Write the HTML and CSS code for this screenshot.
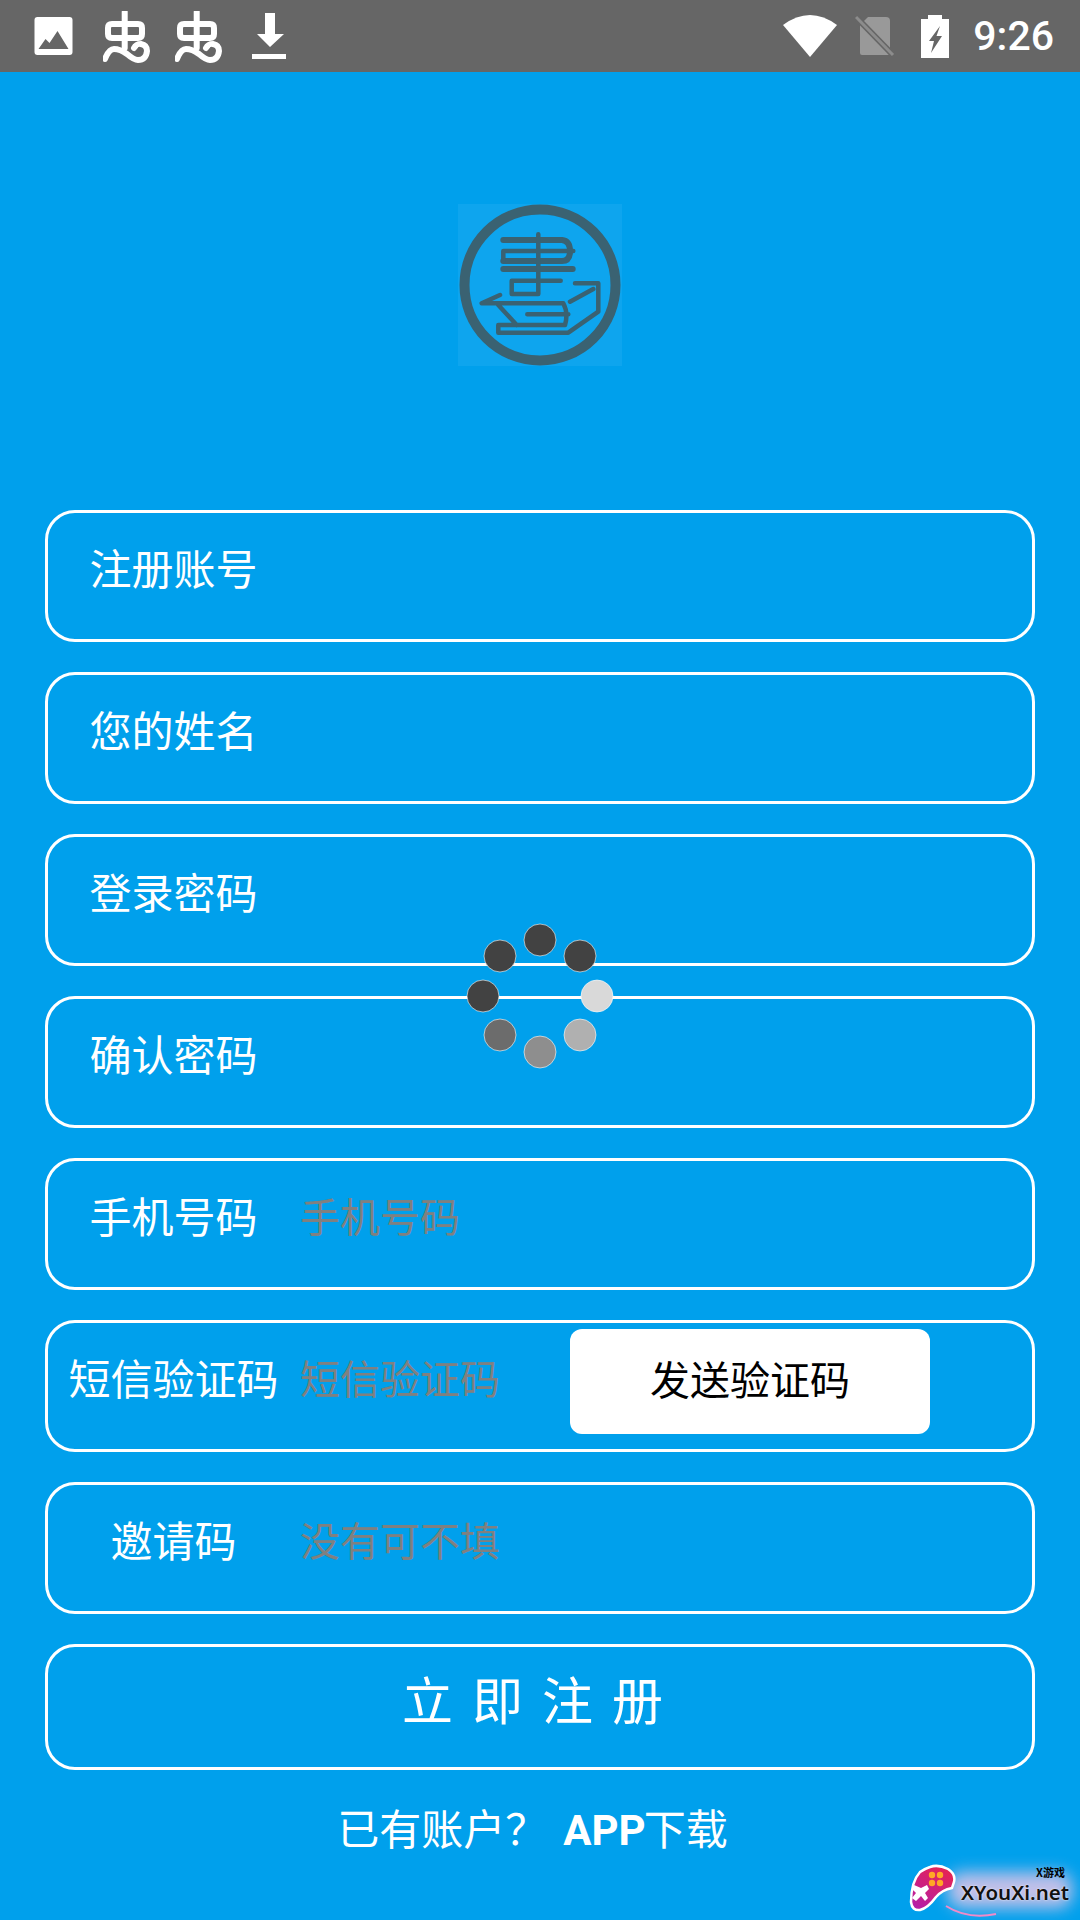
FILE: index.html
```html
<!DOCTYPE html>
<html lang="zh-CN">
<head>
<meta charset="utf-8">
<title>注册账号</title>
<link rel="stylesheet" href="styles.css">
</head>
<body>
<div class="page">
  <header class="status">
    <div class="status-left">
      <svg class="ic-image" viewBox="0 0 38 38"><rect width="38" height="38" rx="3" fill="#fff"/><path d="M4 32 L11 22 L15 26 L23 14 L34 32 Z" fill="#666"/></svg>
      <svg class="ic-worm" viewBox="0 0 50 52"><g fill="none" stroke="#fff" stroke-width="6" stroke-linecap="round" stroke-linejoin="round"><path d="M21.700 1 V37"/><path d="M9 13 H35 Q39 13 39 17 V23 Q39 27 35 27 H9 Q5 27 5 23 V17 Q5 13 9 13 Z"/><path d="M2 48 Q6 38 11 38 Q17 38 24 43 Q31 49 35 49 Q43 49 44 40 Q44 34 38 33 Q33 33 31 37"/></g><circle cx="36.500" cy="37.500" r="1.700" fill="#666"/></svg>
      <svg class="ic-worm" viewBox="0 0 50 52"><g fill="none" stroke="#fff" stroke-width="6" stroke-linecap="round" stroke-linejoin="round"><path d="M21.700 1 V37"/><path d="M9 13 H35 Q39 13 39 17 V23 Q39 27 35 27 H9 Q5 27 5 23 V17 Q5 13 9 13 Z"/><path d="M2 48 Q6 38 11 38 Q17 38 24 43 Q31 49 35 49 Q43 49 44 40 Q44 34 38 33 Q33 33 31 37"/></g><circle cx="36.500" cy="37.500" r="1.700" fill="#666"/></svg>
      <svg class="ic-download" viewBox="0 0 34 46"><path d="M13 0 H23 V21 H32 L18 34 L5 21 H13 Z M0 41 H34 V46 H0 Z" fill="#fff"/></svg>
    </div>
    <div class="status-right">
      <svg class="ic-wifi" viewBox="0 0 54 42"><path d="M0 10 Q27 -10 54 10 L27 42 Z" fill="#fff"/></svg>
      <svg class="ic-sim" viewBox="0 0 40 42"><path d="M13 2 H31 Q35 2 35 6 V38 Q35 40 33 40 H7 Q5 40 5 38 V10 Z" fill="#999"/><path d="M1 2 L38 40" stroke="#666" stroke-width="6"/><path d="M1 2 L38 40" stroke="#8c8c8c" stroke-width="3"/></svg>
      <svg class="ic-battery" viewBox="0 0 28 43"><path d="M7 0 H21 V4 H28 V43 H0 V4 H7 Z" fill="#fff"/><path d="M19 11 L8 26 H13 L10 38 L21 21 H15.500 Z" fill="#666"/></svg>
      <span class="time">9:26</span>
    </div>
  </header>

  <main class="content">
    <div class="logo">
      <svg viewBox="0 0 164 164">
        <g fill="none" stroke="#3a6272" stroke-linecap="round" stroke-linejoin="round">
          <circle cx="82" cy="81" r="75.500" stroke-width="10"/>
          <path stroke-width="6" d="M45.300 36 H104 Q112 37 112 47 Q112 57 104 57 H45.300 M45.300 65 H114.700"/>
          <path stroke-width="4.500" d="M45.300 47 H115.300 M45.300 47 V57 M80.300 30.300 V90 H53.700 V76.700 H102.700"/>
          <path stroke-width="4.500" d="M42 91 L23.700 99.300 H105.300 Q110.500 109 107 121 H40.300 V128.700 H110.300 L140.300 107.700 V79.300 H117 M112 97.700 L135.300 85 M40.300 101 L58.700 121 M69.300 110.300 H110.300"/>
        </g>
      </svg>
    </div>

    <form class="form">
      <div class="field"><span class="label">注册账号</span></div>
      <div class="field"><span class="label">您的姓名</span></div>
      <div class="field"><span class="label">登录密码</span></div>
      <div class="field"><span class="label">确认密码</span></div>
      <div class="field"><span class="label">手机号码</span><span class="hint">手机号码</span></div>
      <div class="field"><span class="label">短信验证码</span><span class="hint">短信验证码</span><span class="send">发送验证码</span></div>
      <div class="field"><span class="label">邀请码</span><span class="hint">没有可不填</span></div>
      <div class="submit"><span class="submit-text">立即注册</span></div>
    </form>

    <footer class="foot"><span class="foot-ask">已有账户？</span><span class="foot-app"><b class="foot-latin">APP</b>下载</span></footer>
  </main>

  <svg class="spinner" viewBox="0 0 140 140">
    <g stroke="#fff" stroke-width="0.600">
      <circle cx="70" cy="23" r="16" fill="#424242"/>
      <circle cx="110" cy="39" r="16" fill="#424242"/>
      <circle cx="127" cy="79" r="16" fill="#d9d9d9"/>
      <circle cx="110" cy="118" r="16" fill="#b0b0b0"/>
      <circle cx="70" cy="135" r="16" fill="#8e8e8e"/>
      <circle cx="30" cy="118" r="16" fill="#6c6c6c"/>
      <circle cx="13" cy="79" r="16" fill="#424242"/>
      <circle cx="30" cy="39" r="16" fill="#424242"/>
    </g>
  </svg>

  <div class="mark">
    <div class="mark-glow"></div>
    <svg class="mark-pad" viewBox="0 0 90 56">
      <defs><linearGradient id="pad" x1="0.800" y1="0" x2="0.200" y2="1"><stop offset="0" stop-color="#e8234f"/><stop offset="1" stop-color="#b51fa8"/></linearGradient></defs>
      <path d="M38 42 Q60 56 88 50" fill="none" stroke="#f28ac8" stroke-width="2"/>
      <path d="M22 3 Q30 0 40 5 Q48 10 46 18 L44 24 Q34 26 28 33 Q20 44 12 46 Q4 47 3 38 Q3 18 12 8 Q16 5 22 3 Z" fill="url(#pad)" stroke="#fff" stroke-width="2.500"/>
      <g fill="#ffa726"><circle cx="24" cy="11" r="3.200"/><circle cx="32" cy="11" r="3.200"/><circle cx="24" cy="19" r="3.200"/><circle cx="32" cy="19" r="3.200"/></g>
      <path d="M6 21 L13 24 L19 21 L21 25 L17 29 L20 34 L17 37 L13 32 L8 37 L4 34 L8 29 L4 25 Z" fill="#fff"/>
    </svg>
    <span class="mark-cn">X游戏</span>
    <span class="mark-en">XYouXi.net</span>
  </div>
</div>
</body>
</html>
```

FILE: styles.css
```css
* { box-sizing: border-box; }
html, body { margin: 0; padding: 0; }
body { font-family: "Noto Sans CJK SC", "Noto Sans", sans-serif; }

.page {
  position: relative;
  width: 1080px;
  height: 1920px;
  overflow: hidden;
  background: #00a0ec;
  color: #fff;
}

/* status bar */
.status {
  height: 72px;
  background: #666;
  display: flex;
  justify-content: space-between;
  align-items: center;
  padding: 0 26px 0 34px;
}
.status-left, .status-right { display: flex; align-items: center; }
.ic-image { width: 39px; height: 38px; margin-right: 30px; }
.ic-worm { width: 50px; height: 52px; margin: 2px 22px 0 0; }
.ic-download { width: 34px; height: 46px; margin-left: 5px; }
.ic-wifi { width: 54px; height: 42px; margin-right: 18px; }
.ic-sim { width: 40px; height: 42px; margin-right: 26px; }
.ic-battery { width: 28px; height: 43px; margin-right: 24px; }
.time { font-family: Roboto, sans-serif; font-weight: 500; font-size: 41px; line-height: 48px; }

/* content */
.content { display: flex; flex-direction: column; align-items: center; }
.logo {
  width: 164px;
  height: 162px;
  margin-top: 132px;
  background: #0ea5ee;
}
.logo svg { display: block; width: 164px; height: 164px; }

.form {
  width: 990px;
  margin-top: 144px;
  display: flex;
  flex-direction: column;
  gap: 30px;
}
.field, .submit {
  border: 3px solid #fff;
  border-radius: 30px;
  display: flex;
  align-items: center;
}
.field { height: 132px; padding-bottom: 9px; }
.submit { height: 126px; justify-content: center; padding: 0 0 18px 4px; }

.label {
  width: 251px;
  margin-bottom: 9px;
  text-align: center;
  font-size: 42px;
  line-height: 60px;
}
.hint {
  width: 270px;
  margin: 0 0 9px 1px;
  font-size: 40px;
  line-height: 60px;
  color: #808080;
  white-space: nowrap;
}
.send {
  width: 360px;
  height: 105px;
  padding-bottom: 7px;
  background: #fff;
  border-radius: 12px;
  color: #000;
  font-size: 40px;
  display: flex;
  align-items: center;
  justify-content: center;
}
.submit-text {
  font-size: 51px;
  letter-spacing: 19px;
  line-height: 70px;
}

.foot {
  display: flex;
  justify-content: center;
  margin-top: 27px;
  padding-right: 15px;
  font-size: 42px;
  line-height: 60px;
}
.foot-ask { margin-right: 16px; }
.foot-latin { margin-right: -2px; font-family: Roboto, sans-serif; font-weight: 700; }

/* loading spinner, over the form */
.spinner {
  position: absolute;
  left: 470px;
  top: 917px;
  width: 140px;
  height: 140px;
  overflow: visible;
}

/* corner watermark */
.mark {
  position: absolute;
  left: 908px;
  top: 1864px;
  width: 168px;
  height: 52px;
}
.mark-glow {
  position: absolute;
  left: 40px;
  top: 8px;
  width: 124px;
  height: 36px;
  border-radius: 14px;
  background: #f2c8e8;
  opacity: 0.8;
  filter: blur(8px);
}
.mark-pad { position: absolute; left: 0; top: 0; width: 90px; height: 56px; }
.mark-cn {
  position: absolute;
  right: 11px;
  top: 1px;
  font-size: 11px;
  line-height: 14px;
  font-weight: 700;
  color: #000;
}
.mark-en {
  position: absolute;
  left: 53px;
  top: 18px;
  font-family: "Noto Sans", sans-serif;
  font-size: 20.5px;
  line-height: 20px;
  font-weight: 600;
  color: #111;
  text-shadow: 0 0 2px #fff;
  white-space: nowrap;
}
```
